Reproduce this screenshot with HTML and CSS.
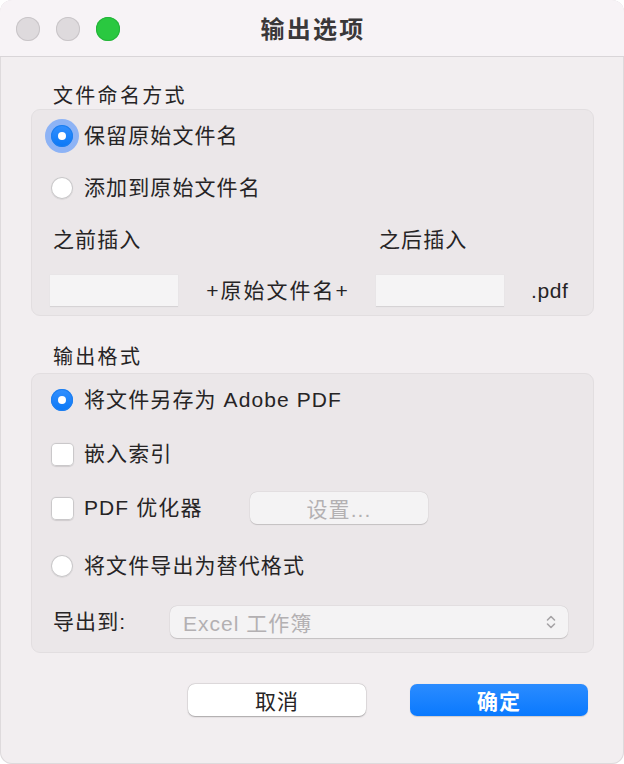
FILE: index.html
```html
<!DOCTYPE html>
<html lang="zh-CN">
<head>
<meta charset="utf-8">
<title>输出选项</title>
<link rel="stylesheet" href="styles.css">
</head>
<body>
<div class="window">
  <header class="titlebar">
    <div class="lights">
      <span class="light gray"></span>
      <span class="light gray"></span>
      <span class="light green"></span>
    </div>
    <div class="title">输出选项</div>
    <div></div>
  </header>

  <main class="content">
    <div class="section-label">文件命名方式</div>
    <section class="group group-naming">
      <label class="row">
        <span class="radio checked focus"></span>
        <span class="text">保留原始文件名</span>
      </label>
      <label class="row">
        <span class="radio"></span>
        <span class="text">添加到原始文件名</span>
      </label>
      <div class="insert-grid">
        <span class="text sub-label">之前插入</span>
        <span></span>
        <span class="text sub-label">之后插入</span>
        <span></span>
        <span class="input"></span>
        <span class="text middle">+原始文件名+</span>
        <span class="input"></span>
        <span class="text ext">.pdf</span>
      </div>
    </section>

    <div class="section-label second">输出格式</div>
    <section class="group group-format">
      <label class="row">
        <span class="radio checked"></span>
        <span class="text">将文件另存为 Adobe PDF</span>
      </label>
      <label class="row">
        <span class="checkbox"></span>
        <span class="text">嵌入索引</span>
      </label>
      <div class="row">
        <label class="check-col">
          <span class="checkbox"></span>
          <span class="text">PDF 优化器</span>
        </label>
        <button class="btn disabled-btn">设置...</button>
      </div>
      <label class="row row-alt">
        <span class="radio"></span>
        <span class="text">将文件导出为替代格式</span>
      </label>
      <div class="row row-export">
        <span class="text export-label">导出到:</span>
        <div class="select">
          <span class="select-text">Excel 工作簿</span>
          <svg class="chevrons" width="10" height="16" viewBox="0 0 10 16" aria-hidden="true">
            <path d="M1.5 6 L5 2.5 L8.5 6" fill="none" stroke="#a6a4a6" stroke-width="1.6" stroke-linecap="round" stroke-linejoin="round"/>
            <path d="M1.5 10 L5 13.5 L8.5 10" fill="none" stroke="#a6a4a6" stroke-width="1.6" stroke-linecap="round" stroke-linejoin="round"/>
          </svg>
        </div>
      </div>
    </section>

    <div class="actions">
      <button class="btn action cancel">取消</button>
      <button class="btn action ok">确定</button>
    </div>
  </main>
</div>
</body>
</html>
```

FILE: styles.css
```css
* { box-sizing: border-box; }

html, body {
  margin: 0;
  padding: 0;
  background: #ffffff;
}

body {
  width: 624px;
  height: 764px;
  overflow: hidden;
  font-family: "Liberation Sans", "Noto Sans CJK SC", sans-serif;
  color: #262425;
}

.window {
  width: 624px;
  height: 764px;
  background: #f2eef0;
  border-radius: 12px;
  overflow: hidden;
  box-shadow: inset 0 0 0 1px #dedadc;
}

.titlebar {
  height: 57px;
  background: #f7f3f6;
  border-bottom: 1px solid #d9d5d8;
  display: grid;
  grid-template-columns: 1fr auto 1fr;
  align-items: center;
}

.lights {
  display: flex;
  gap: 16px;
  padding-left: 16px;
  padding-top: 1px;
}

.light {
  width: 24px;
  height: 24px;
  border-radius: 50%;
}

.light.gray {
  background: #dedadd;
  box-shadow: inset 0 0 0 1px #c9c5c8;
}

.light.green {
  background: #2ac840;
  box-shadow: inset 0 0 0 1px #25b33a;
}

.title {
  font-family: "Noto Sans CJK SC", sans-serif;
  font-weight: 700;
  font-size: 24px;
  letter-spacing: 2.2px;
  color: #3a3839;
  padding-bottom: 2px;
  padding-left: 2px;
}

.content {
  padding: 24px 30px 0 31px;
}

.section-label {
  font-family: "Noto Sans CJK SC", sans-serif;
  font-size: 20px;
  letter-spacing: 2.3px;
  line-height: 28px;
  height: 28px;
  padding-left: 22px;
  color: #262425;
}

.section-label.second {
  margin-top: 26px;
  margin-bottom: 3px;
}

.group {
  background: #ebe7e9;
  border: 1px solid #e2dee0;
  border-radius: 9px;
  padding: 9px 24px 8px 18px;
  display: flex;
  flex-direction: column;
}

.group-naming { gap: 18px; height: 207px; }
.group-format { gap: 20px; height: 280px; padding-bottom: 13px; }

.row {
  height: 34px;
  display: flex;
  align-items: center;
}

.row-alt { margin-top: 4px; }
.row-export { margin-top: 2px; }

.text {
  font-size: 21px;
  letter-spacing: 1.1px;
  line-height: 34px;
  white-space: nowrap;
}

.radio {
  width: 22px;
  height: 22px;
  border-radius: 50%;
  margin-left: 1px;
  margin-right: 11px;
  background: #ffffff;
  box-shadow: inset 0 0 0 1px #cac8ca, 0 0.5px 1px rgba(0,0,0,0.12);
  flex: none;
  position: relative;
}

.radio.checked {
  background: linear-gradient(#3390ff, #0a78f6);
  box-shadow: inset 0 0 0 1px #1e7ff0;
}

.radio.checked::after {
  content: "";
  position: absolute;
  left: 7px;
  top: 7px;
  width: 8px;
  height: 8px;
  border-radius: 50%;
  background: #ffffff;
}

.radio.focus {
  box-shadow: inset 0 0 0 1px #1e7ff0, 0 0 0 6px #8db3f5;
}

.checkbox {
  width: 23px;
  height: 23px;
  border-radius: 5px;
  margin-left: 1px;
  margin-right: 10px;
  background: #ffffff;
  box-shadow: inset 0 0 0 1px #cac8ca, 0 0.5px 1px rgba(0,0,0,0.12);
  flex: none;
}

.insert-grid {
  display: grid;
  grid-template-columns: 128px 198px 128px auto;
  grid-template-rows: 34px 32px;
  row-gap: 18px;
  align-items: center;
}

.sub-label { padding-left: 3px; }

.input {
  height: 32px;
  background: #f5f4f5;
  border-bottom: 1px solid #d6d3d5;
  box-shadow: 0 0 0 0.5px #e6e3e5;
}

.middle {
  text-align: center;
  line-height: 32px;
  letter-spacing: 2px;
  padding-left: 2px;
}

.ext {
  padding-left: 27px;
  line-height: 32px;
  letter-spacing: 0.6px;
}

.check-col {
  width: 200px;
  display: flex;
  align-items: center;
}

.btn {
  font-family: "Liberation Sans", "Noto Sans CJK SC", sans-serif;
  border: none;
  margin: 0;
  padding: 0;
  height: 32px;
  border-radius: 7px;
  font-size: 21px;
  letter-spacing: 1.1px;
}

.disabled-btn {
  width: 178px;
  background: #f4f3f4;
  color: #b3b0b2;
  box-shadow: 0 0.5px 1px rgba(0,0,0,0.15), 0 0 0 0.5px rgba(0,0,0,0.05);
}

.export-label {
  width: 120px;
  padding-left: 3px;
}

.select {
  width: 398px;
  height: 32px;
  border-radius: 7px;
  background: #f4f3f4;
  box-shadow: 0 0.5px 1px rgba(0,0,0,0.15), 0 0 0 0.5px rgba(0,0,0,0.05);
  display: flex;
  align-items: center;
  justify-content: space-between;
  padding: 0 12px 0 13px;
}

.select-text {
  font-size: 21px;
  letter-spacing: 1px;
  color: #b3b0b2;
  white-space: nowrap;
}

.chevrons { flex: none; }

.actions {
  display: flex;
  justify-content: flex-end;
  gap: 44px;
  padding-right: 6px;
  margin-top: 31px;
}

.action {
  width: 178px;
}

.cancel {
  background: #ffffff;
  color: #262425;
  font-weight: 400;
  box-shadow: 0 0.5px 1.5px rgba(0,0,0,0.28), 0 0 0 0.5px rgba(0,0,0,0.08);
}

.ok {
  background: linear-gradient(#2b8cff, #0a79fe);
  color: #ffffff;
  font-weight: 700;
  box-shadow: 0 0.5px 1px rgba(0,0,0,0.15);
}
```
